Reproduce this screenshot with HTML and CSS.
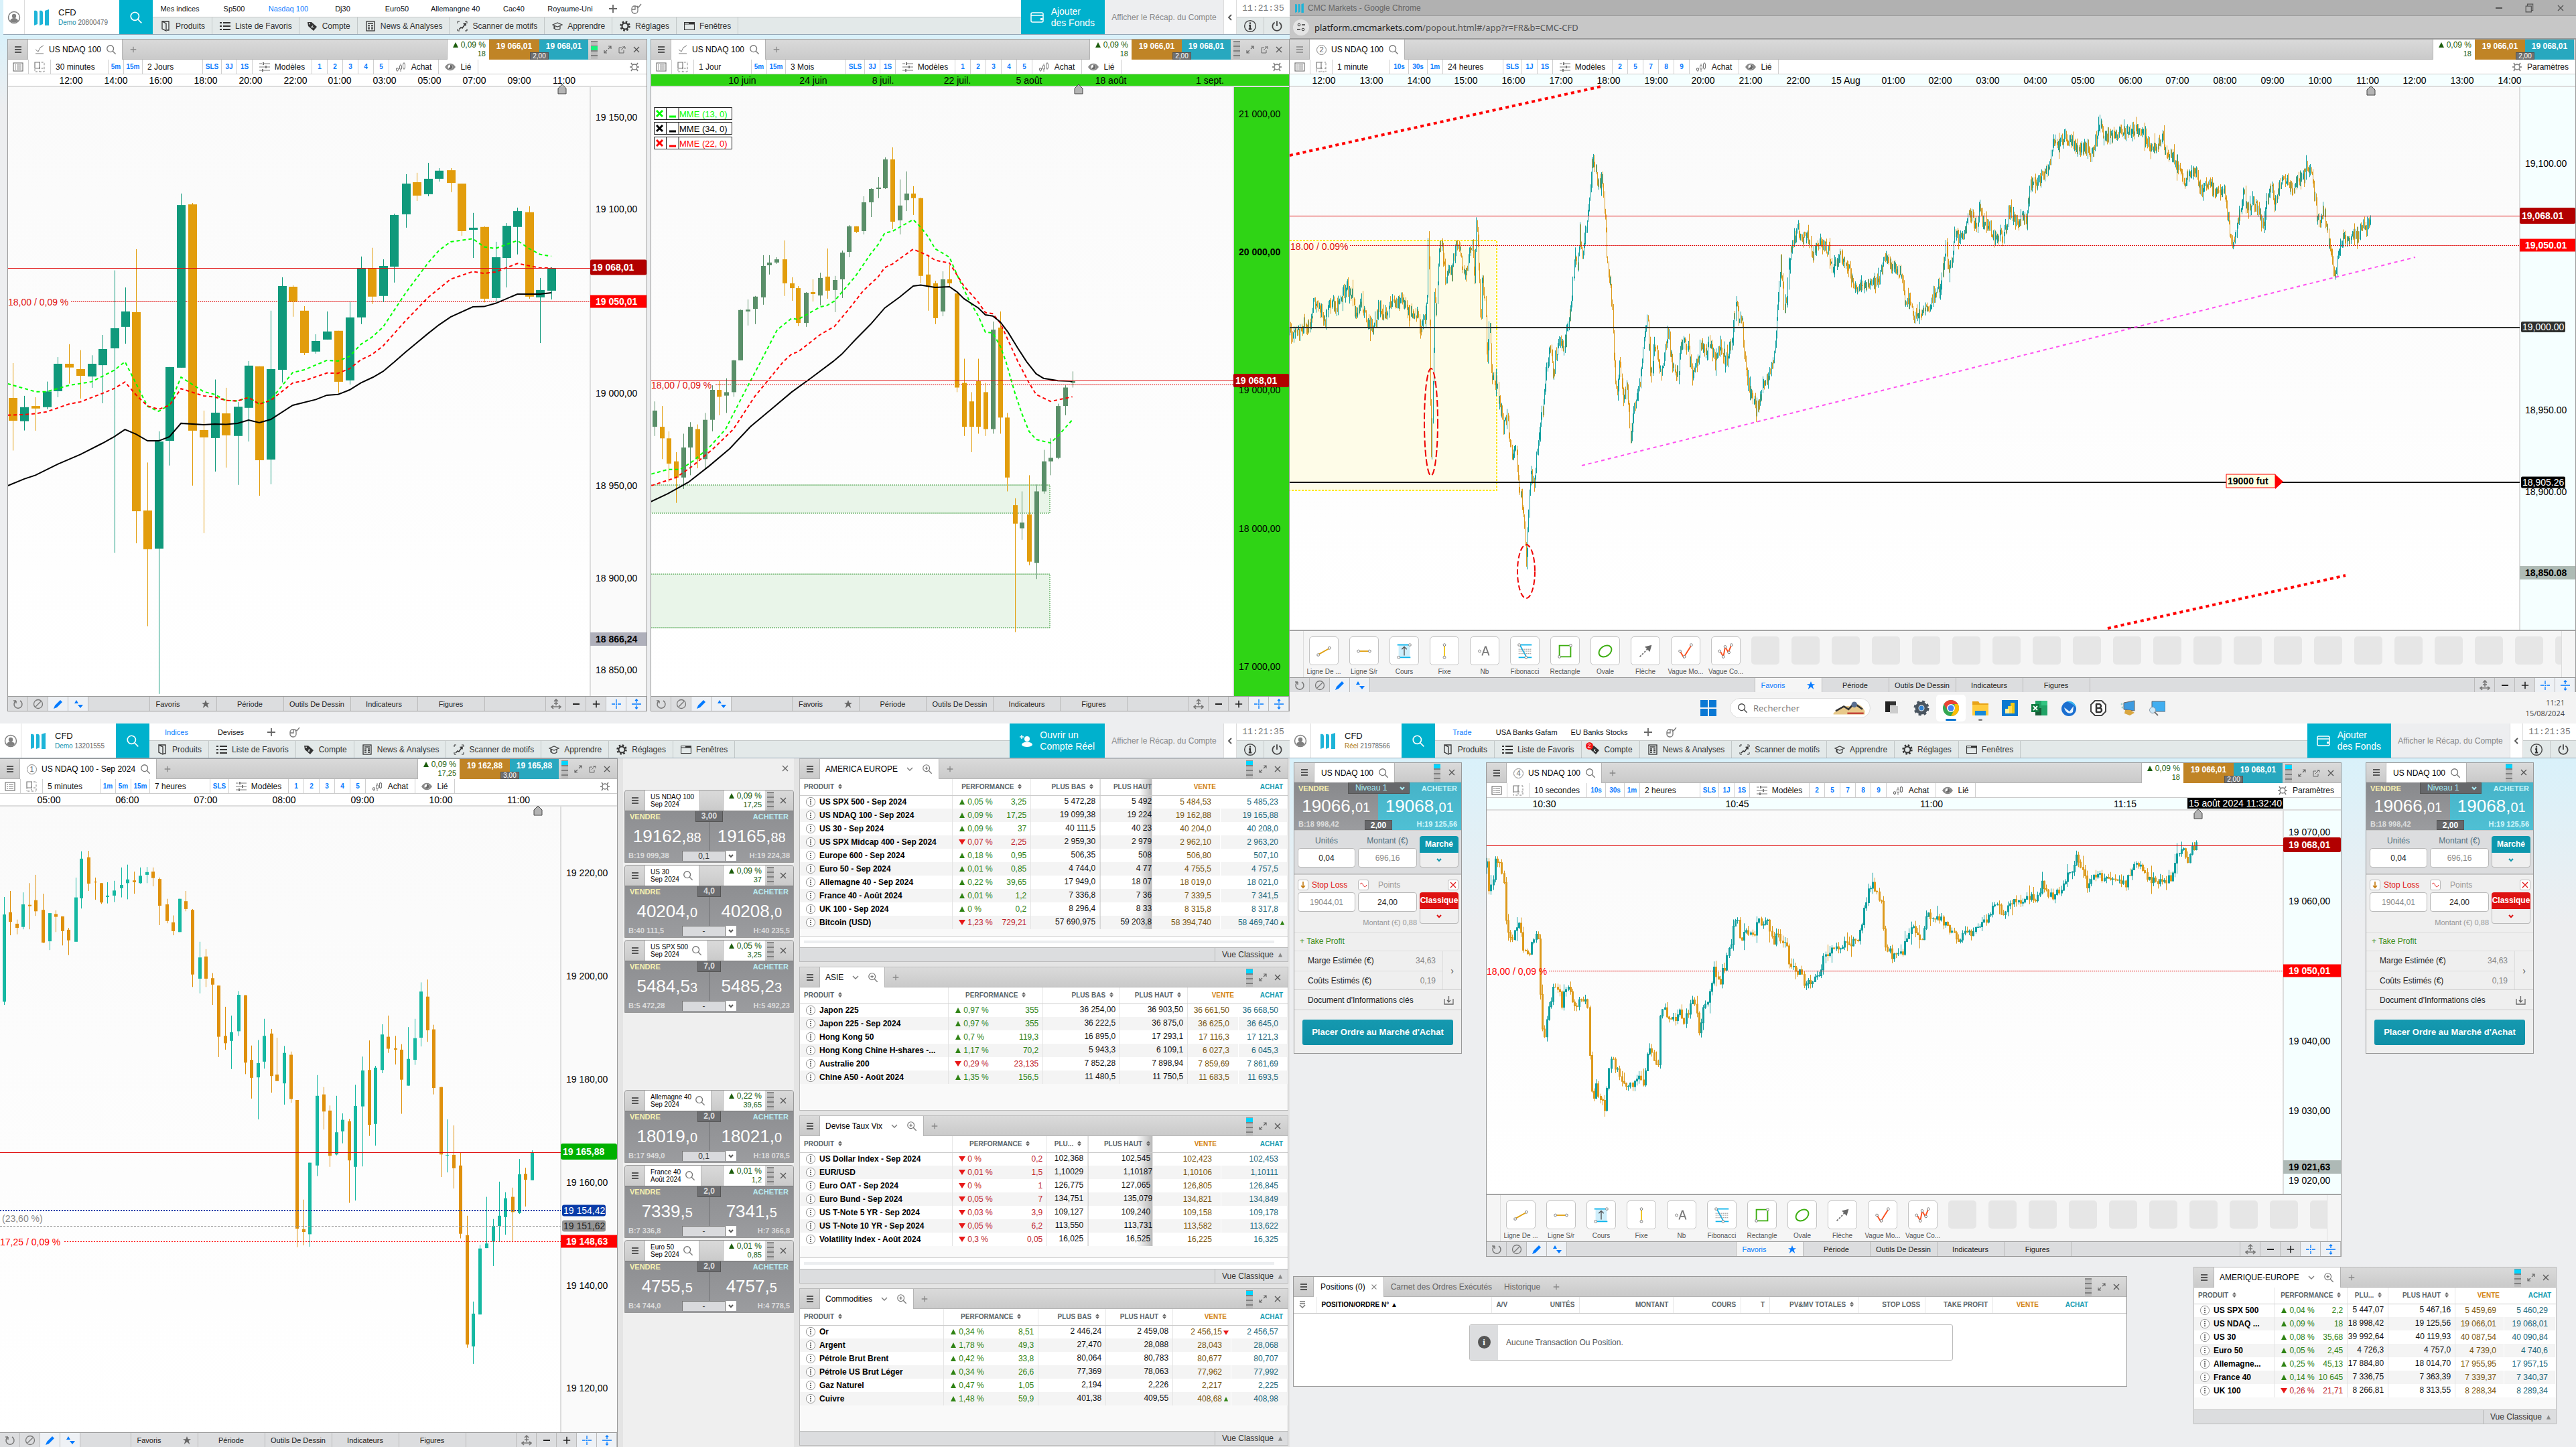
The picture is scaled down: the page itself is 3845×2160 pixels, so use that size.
FILE: index.html
```html
<!DOCTYPE html>
<html lang="fr">
<head>
<meta charset="utf-8">
<title>CMC Markets</title>
<link rel="stylesheet" href="styles.css">
</head>
<body>
<svg class="sprite" aria-hidden="true">
  <symbol id="user" viewBox="0 0 20 20"><circle cx="10" cy="10" r="8.5" fill="none" stroke="#808080" stroke-width="1.5"/><circle cx="10" cy="8" r="3.2" fill="#808080"/><path d="M4 15c1-3 3-4 6-4s5 1 6 4c-3 3.500-9 3.500-12 0z" fill="#808080"/></symbol>
  <symbol id="logo" viewBox="0 0 22 24"><path d="M0 2c3-1 5 0 5 3v17L0 24zM8 2c3-1 5 0 5 3v17l-5 2zM16 2l6-2v24h-6z" fill="#1db4d8"/></symbol>
  <symbol id="search" viewBox="0 0 18 18"><circle cx="7.500" cy="7.500" r="5.500" fill="none" stroke="currentColor" stroke-width="1.500"/><path d="M11.500 11.500l5 5" stroke="currentColor" stroke-width="1.500"/></symbol>
  <symbol id="zoomin" viewBox="0 0 18 18"><circle cx="7.500" cy="7.500" r="5.500" fill="none" stroke="currentColor" stroke-width="1.300"/><path d="M11.500 11.500l5 5M5 7.500h5M7.500 5v5" stroke="currentColor" stroke-width="1.500"/></symbol>
  <symbol id="plus" viewBox="0 0 14 14"><path d="M7 1v12M1 7h12" stroke="currentColor" stroke-width="1.800"/></symbol>
  <symbol id="minus" viewBox="0 0 14 14"><path d="M2 7h10" stroke="currentColor" stroke-width="2"/></symbol>
  <symbol id="cross" viewBox="0 0 14 14"><path d="M3 3l8 8M11 3l-8 8" stroke="currentColor" stroke-width="1.300"/></symbol>
  <symbol id="mouse" viewBox="0 0 16 16"><rect x="1" y="4" width="9" height="11" rx="4" fill="none" stroke="#777" stroke-width="1.300"/><path d="M1 9h5V4M9 4l2 2 4-5" fill="none" stroke="#777" stroke-width="1.300"/></symbol>
  <symbol id="book" viewBox="0 0 16 16"><path d="M3 1h10v13h-3M3 1l6 3v11l-6-3z" fill="none" stroke="#333" stroke-width="1.300"/></symbol>
  <symbol id="list" viewBox="0 0 16 16"><path d="M0 3h3M0 8h3M0 13h3M5 3h11M5 8h11M5 13h11" stroke="#333" stroke-width="2"/></symbol>
  <symbol id="tag" viewBox="0 0 16 16"><path d="M1 2l6 0 8 7-5 6-8-7z" fill="#333"/><circle cx="4" cy="4.500" r="1" fill="#fff"/><path d="M7 8l3 3M9 7l-2 4" stroke="#e3eaea"/></symbol>
  <symbol id="news" viewBox="0 0 16 16"><rect x="2" y="1" width="12" height="14" fill="none" stroke="#333" stroke-width="1.300"/><path d="M4 4h8M4 7h3M9 7h3M4 9.500h3M9 9.500h3M4 12h3M9 12h3" stroke="#333" stroke-width="1.600"/></symbol>
  <symbol id="scan" viewBox="0 0 16 16"><path d="M1 4V1h3M12 1h3v3M15 12v3h-3M4 15H1v-3" fill="none" stroke="#333"/><path d="M3 13l3-3 2 1 5-7M9.500 4.500L13 4v3.500" fill="none" stroke="#333" stroke-width="1.500"/></symbol>
  <symbol id="learn" viewBox="0 0 16 16"><path d="M1 6l7-3 7 3-7 3zM4 8v4c2 2 6 2 8 0V8M3 7v5" fill="none" stroke="#444" stroke-width="1.200"/></symbol>
  <symbol id="gear" viewBox="0 0 16 16"><circle cx="8" cy="8" r="4.500" fill="none" stroke="#333" stroke-width="2"/><circle cx="8" cy="8" r="6.500" fill="none" stroke="#333" stroke-width="2.500" stroke-dasharray="2.500 2.600"/></symbol>
  <symbol id="windows" viewBox="0 0 16 16"><path d="M.5 2.500h15v11H.5zM0 5h16" fill="none" stroke="#333" stroke-width="1.200"/><path d="M7 2h8v3H7z" fill="#333"/></symbol>
  <symbol id="wallet" viewBox="0 0 20 16"><rect x="1" y="1" width="18" height="14" rx="2" fill="none" stroke="#fff" stroke-width="1.500"/><path d="M1 5h18" stroke="#fff" stroke-width="1.500"/><rect x="15" y="9" width="3" height="3" fill="#fff"/></symbol>
  <symbol id="adduser" viewBox="0 0 20 20"><circle cx="12" cy="7" r="4" fill="#fff"/><path d="M4 16c0-6 16-6 16 0-2 4-14 4-16 0z" fill="#fff"/><path d="M4 1v6M1 4h6" stroke="#fff" stroke-width="1.300"/></symbol>
  <symbol id="chevleft" viewBox="0 0 8 10"><path d="M6 1L2 5l4 4" fill="none" stroke="#555" stroke-width="1.800"/></symbol>
  <symbol id="chevdown" viewBox="0 0 12 8"><path d="M2 2l4 4 4-4" fill="none" stroke="currentColor" stroke-width="1.300"/></symbol>
  <symbol id="chevbold" viewBox="0 0 10 8"><path d="M2 2l3 3 3-3" fill="none" stroke="currentColor" stroke-width="2"/></symbol>
  <symbol id="info" viewBox="0 0 18 18"><circle cx="9" cy="9" r="7.500" fill="none" stroke="#444" stroke-width="1.300"/><path d="M9 4v2M7.500 8H9v5M7 13h4" stroke="#333" stroke-width="2"/></symbol>
  <symbol id="power" viewBox="0 0 18 18"><path d="M6 4a6 6 0 1 0 6 0M9 2v7" fill="none" stroke="#444" stroke-width="1.600"/></symbol>
  <symbol id="burger" viewBox="0 0 12 12"><path d="M1 2h10M1 6h10M1 10h10" stroke="currentColor" stroke-width="1.800"/></symbol>
  <symbol id="linechart" viewBox="0 0 14 14"><path d="M1 7l4 3 3-6 5-3M1 13h12" fill="none" stroke="#777"/></symbol>
  <symbol id="expand" viewBox="0 0 12 12"><path d="M1 7v4h4M1 11l4-4M11 5V1H7M11 1L7 5" fill="none" stroke="#666" stroke-width="1.200"/></symbol>
  <symbol id="popout" viewBox="0 0 12 12"><path d="M6 3H2v8h7V7M7 2h4v3M11 1L5 7" fill="none" stroke="#666"/></symbol>
  <symbol id="sheet" viewBox="0 0 16 14"><rect x="1" y="1" width="14" height="12" fill="none" stroke="#777" stroke-width="1.200"/><path d="M3 4h2M3 7h2M3 10h2M6 4h7M6 7h7M6 10h7" stroke="#777" stroke-width="1.200"/></symbol>
  <symbol id="layout" viewBox="0 0 16 16"><path d="M1 1h7v9H1z" fill="none" stroke="#777" stroke-width="1.200"/><path d="M8 1h7v14H1v-5M8 10h7M8 8v7" fill="none" stroke="#777" stroke-dasharray="1 1"/></symbol>
  <symbol id="sliders" viewBox="0 0 16 14"><path d="M0 2h4M6 2h10M0 7h9M11 7h5M0 12h4M6 12h10" stroke="#777"/><path d="M6 0v4M10 5v4M5 10v4" stroke="#777" stroke-width="2"/></symbol>
  <symbol id="candle" viewBox="0 0 16 14"><path d="M2 8v6M7 2v12M12 0v11" stroke="#888"/><path d="M.500 9h3v3h-3zM5.500 5h3v5h-3zM10.500 2h3v7h-3z" fill="#fff" stroke="#777"/></symbol>
  <symbol id="eye" viewBox="0 0 16 12"><path d="M0 6c4-7 12-7 16 0-4 7-12 7-16 0z" fill="#888"/><circle cx="8" cy="6" r="3.500" fill="#fff"/><path d="M8 2.500A3.500 3.500 0 1 1 5 8l3-2z" fill="#666"/></symbol>
  <symbol id="cog" viewBox="0 0 16 14"><circle cx="8" cy="7" r="4" fill="none" stroke="#777" stroke-width="1.300"/><path d="M1 7h3M12 7h3M3 1l2 3M13 1l-2 3M3 13l2-3M13 13l-2-3" stroke="#777" stroke-width="1.500"/></symbol>
  <symbol id="reload" viewBox="0 0 16 16"><path d="M5 3a6 6 0 1 0 6 0M5 3v4M5 3H1" fill="none" stroke="#777" stroke-width="1.500"/></symbol>
  <symbol id="forbid" viewBox="0 0 16 16"><circle cx="8" cy="8" r="6.500" fill="none" stroke="#777" stroke-width="1.300"/><path d="M4 12l8-8" stroke="#777" stroke-width="1.300"/></symbol>
  <symbol id="pencil" viewBox="0 0 16 16"><path d="M1 15l2-5 8-8 3 3-8 8z" fill="#007aff"/></symbol>
  <symbol id="updown" viewBox="0 0 16 16"><path d="M2 7l3-5 3 5zM7 9h8l-4 5z" fill="#007aff"/></symbol>
  <symbol id="star" viewBox="0 0 14 14"><path d="M7 0l2 5h5l-4 3 2 6-5-4-5 4 2-6-4-3h5z" fill="currentColor"/></symbol>
  <symbol id="fit" viewBox="0 0 16 16"><path d="M8 1v9M5 4l3-3 3 3M5 7h6M2 12h12M4 10l-3 2 3 3M12 10l3 2-3 3" fill="none" stroke="#777" stroke-width="1.600"/></symbol>
  <symbol id="xhair" viewBox="0 0 16 16"><path d="M8 1v5M8 10v5M1 8h5M10 8h5M8 7v2M7 8h2" stroke="#007aff" stroke-width="1.300"/></symbol>
  <symbol id="vfit" viewBox="0 0 16 16"><path d="M1 8h14M8 1v5M8 10v5M6 3l2-2 2 2M6 13l2 2 2-2" fill="none" stroke="#007aff" stroke-width="1.300"/></symbol>
  <symbol id="sort" viewBox="0 0 6 8"><path d="M0 3.500L3 0l3 3.500zM0 4.500h6L3 8z" fill="#666"/></symbol>
  <symbol id="dots" viewBox="0 0 18 18"><circle cx="9" cy="9" r="7.500" fill="#fff" stroke="#888"/><path d="M8 4.500h2v2H8zM8 8h2v2H8zM8 11.500h2v2H8z" fill="#555"/></symbol>
  <symbol id="up" viewBox="0 0 10 8"><path d="M1 8l4-8 4 8z" fill="currentColor"/></symbol>
  <symbol id="down" viewBox="0 0 10 8"><path d="M0 0h10L5 8z" fill="currentColor"/></symbol>
  <symbol id="download" viewBox="0 0 16 14"><path d="M1 5v8h13V5M7.500 1v8M5 7l2.500 3L10 7" fill="none" stroke="#666" stroke-width="1.300"/></symbol>
  <symbol id="wave" viewBox="0 0 12 12"><path d="M1 5c3-4 4 0 5 2s3 3 5-1" fill="none" stroke="#e01818"/></symbol>
  <symbol id="arrowdn" viewBox="0 0 12 12"><path d="M6 1v9M3 7l3 3 3-3" fill="none" stroke="#c47a10" stroke-width="1.600"/></symbol>
  <symbol id="tune" viewBox="0 0 16 16"><circle cx="5" cy="4" r="1.800" fill="none" stroke="#333"/><path d="M9 4h5M2 11h5" stroke="#333" stroke-width="1.500"/><circle cx="11" cy="11" r="1.800" fill="none" stroke="#333"/></symbol>
  <symbol id="restore" viewBox="0 0 12 12"><path d="M1 3.500h7V11H1zM3 3V1h7v8H8" fill="none" stroke="#555"/></symbol>
  <symbol id="handle" viewBox="0 0 10 12"><path d="M1 1h8M1 4h8M1 6l4 4 4-4" fill="none" stroke="#777" stroke-width="1.500"/></symbol>
  <symbol id="t0" viewBox="0 0 30 30"><path d="M7 20L23 11" stroke="#e0a010" stroke-width="2"/><circle cx="6" cy="21" r="2" fill="#fff" stroke="#777"/><circle cx="24" cy="10" r="2" fill="#fff" stroke="#777"/></symbol>
  <symbol id="t1" viewBox="0 0 30 30"><path d="M8 15h14" stroke="#e0a010" stroke-width="2"/><circle cx="6" cy="15" r="2" fill="#fff" stroke="#777"/><circle cx="24" cy="15" r="2" fill="#fff" stroke="#777"/></symbol>
  <symbol id="t2" viewBox="0 0 30 30"><path d="M6 5h18v20H6z" fill="#cdeefb"/><path d="M4 5h18M7 25h18" stroke="#0bb4ec" stroke-width="2"/><path d="M15 22V9M11 12l4-4 4 4" fill="none" stroke="#555" stroke-width="1.500"/><circle cx="24" cy="5" r="2" fill="#fff" stroke="#777"/><circle cx="6" cy="25" r="2" fill="#fff" stroke="#777"/></symbol>
  <symbol id="t3" viewBox="0 0 30 30"><path d="M15 6v18" stroke="#f0c419" stroke-width="2"/><circle cx="15" cy="5" r="2" fill="#fff" stroke="#777"/><circle cx="15" cy="25" r="2" fill="#fff" stroke="#777"/></symbol>
  <symbol id="t4" viewBox="0 0 30 30"><circle cx="7" cy="15" r="2" fill="#fff" stroke="#777"/><path d="M11 22l5-14h1l5 14M13 17h7" fill="none" stroke="#777" stroke-width="2"/></symbol>
  <symbol id="t5" viewBox="0 0 30 30"><path d="M8 5h18M5 25h21M7 5l11 20" stroke="#0bb4ec" stroke-width="2"/><path d="M5 12h20M5 15h20M5 19h20" stroke="#888" stroke-dasharray="2 1"/><circle cx="6" cy="5" r="2" fill="#fff" stroke="#777"/><circle cx="17" cy="25" r="2" fill="#fff" stroke="#777"/></symbol>
  <symbol id="t6" viewBox="0 0 30 30"><path d="M6 6h18v18H6z" fill="none" stroke="#3dae11" stroke-width="2"/><circle cx="24" cy="6" r="2" fill="#fff" stroke="#777"/><circle cx="6" cy="24" r="2" fill="#fff" stroke="#777"/></symbol>
  <symbol id="t7" viewBox="0 0 30 30"><ellipse cx="15" cy="15" rx="11" ry="8" transform="rotate(-35 15 15)" fill="none" stroke="#3dae11" stroke-width="2"/></symbol>
  <symbol id="t8" viewBox="0 0 30 30"><path d="M6 24L20 10" stroke="#777" stroke-width="2" stroke-dasharray="3 2"/><path d="M14 8l11-3-3 11z" fill="#666"/></symbol>
  <symbol id="t9" viewBox="0 0 30 30"><path d="M6 15l6 10L24 6" fill="none" stroke="#fb4b1a" stroke-width="2"/><circle cx="6" cy="15" r="2" fill="#fff" stroke="#777"/><circle cx="13" cy="24" r="2" fill="#fff" stroke="#777"/><circle cx="24" cy="5" r="2" fill="#fff" stroke="#777"/></symbol>
  <symbol id="t10" viewBox="0 0 30 30"><path d="M6 15l5 9 3-16 5 9 5-12" fill="none" stroke="#fb4b1a" stroke-width="2"/><circle cx="5" cy="15" r="2" fill="#fff" stroke="#777"/><circle cx="11" cy="24" r="2" fill="#fff" stroke="#777"/><circle cx="14" cy="8" r="2" fill="#fff" stroke="#777"/><circle cx="20" cy="17" r="2" fill="#fff" stroke="#777"/><circle cx="24" cy="5" r="2" fill="#fff" stroke="#777"/></symbol>
  <symbol id="winlogo" viewBox="0 0 24 24"><path d="M0 0h11v11H0zM13 0h11v11H13zM0 13h11v11H0zM13 13h11v11H13z" fill="#0a78d4"/></symbol>
  <symbol id="taskview" viewBox="0 0 24 24"><path d="M2 2h16v16H2z" fill="#333"/><path d="M8 8h14v13H8z" fill="#f3f3f3"/><path d="M9 9h12v11H9z" fill="#ccc"/><path d="M2 2h7v16H2z" fill="#222"/></symbol>
  <symbol id="wset" viewBox="0 0 24 24"><circle cx="12" cy="12" r="7" fill="none" stroke="#4a5560" stroke-width="5"/><circle cx="12" cy="12" r="10" fill="none" stroke="#4a5560" stroke-width="3" stroke-dasharray="4 4"/><circle cx="12" cy="12" r="3.500" fill="#2f80d0"/></symbol>
  <symbol id="chrome" viewBox="0 0 24 24"><circle cx="12" cy="12" r="12" fill="#34a853"/><path d="M12 0a12 12 0 0 1 10.500 6H12L6.500 14.500 1.600 6A12 12 0 0 1 12 0z" fill="#ea4335"/><path d="M22.500 6A12 12 0 0 1 12 24l5.500-10V6z" fill="#fbbc05"/><circle cx="12" cy="12" r="6" fill="#fff"/><circle cx="12" cy="12" r="4.500" fill="#4285f4"/></symbol>
  <symbol id="folder" viewBox="0 0 24 24"><path d="M0 2h9l2 3h13v18H0z" fill="#e8a317"/><path d="M0 7h24v16H0z" fill="#ffcb3d"/><path d="M4 16h16v7H4z" fill="#1689d8"/></symbol>
  <symbol id="pbi" viewBox="0 0 24 24"><path d="M0 0h24v24H0z" fill="#0b78d0"/><path d="M13 4h6v16h-6z" fill="#f2c811"/><path d="M9 9h6v11H9z" fill="#ffd94a"/><path d="M5 13h6v7H5z" fill="#fff09a"/></symbol>
  <symbol id="excel" viewBox="0 0 24 24"><path d="M6 1h18v22H6z" fill="#21a366"/><path d="M15 1h9v7h-9z" fill="#33c481"/><path d="M6 12h9v11H6z" fill="#185c37"/><path d="M0 6h12v12H0z" fill="#107c41"/><path d="M3 9l6 6M9 9l-6 6" stroke="#fff" stroke-width="1.800"/></symbol>
  <symbol id="bird" viewBox="0 0 24 24"><circle cx="12" cy="13" r="11" fill="#1b6fd0"/><path d="M8 2c8-2 14 3 15 10-3-5-8-8-15-10z" fill="#39b5f0"/><path d="M5 11l8 6 6-8-1 9c-5 4-11 1-13-7z" fill="#e8f3fd"/></symbol>
  <symbol id="bee" viewBox="0 0 24 24"><path d="M7 1h10l6 6v10l-6 6H7l-6-6V7z" fill="#fff" stroke="#444" stroke-width="2"/><path d="M8 6h5a3 3 0 0 1 0 6H9h5a3 3 0 0 1 0 6H8M9 6v12" fill="none" stroke="#333" stroke-width="2.500"/></symbol>
  <symbol id="pcbox" viewBox="0 0 24 24"><path d="M6 4l16-3v15L6 14z" fill="#3d9be0" stroke="#666"/><path d="M8 15l8 0 6 4-7 4-8-3z" fill="#d9a640"/><circle cx="3" cy="6" r="1.500" fill="#9cc"/><circle cx="4" cy="11" r="1.500" fill="#9cc"/></symbol>
  <symbol id="pcfind" viewBox="0 0 24 24"><path d="M4 2h20v15H4z" fill="#41aef0" stroke="#567"/><circle cx="5" cy="15" r="4.500" fill="#cfe8f6" stroke="#89a"/><path d="M8 18l5 5" stroke="#777" stroke-width="2"/></symbol>
</svg>

<main class="desk">
  <section class="screen screen-tl">
    <header class="topbar" data-topbar="indices"></header>
    <div class="pair">
      <article class="win chart" data-chart="m30"></article>
      <article class="win chart" data-chart="daily"></article>
    </div>
  </section>

  <section class="screen screen-tr">
    <div class="browser-title"><svg class="fav"><use href="#logo"/></svg><span>CMC Markets - Google Chrome</span>
      <div class="sys"><button aria-label="Réduire"><svg><use href="#minus"/></svg></button><button aria-label="Restaurer"><svg><use href="#restore"/></svg></button><button aria-label="Fermer"><svg><use href="#cross"/></svg></button></div></div>
    <div class="browser-url"><i class="site"><svg><use href="#tune"/></svg></i><span>platform.cmcmarkets.com<em>/popout.html#/app?r=FR&amp;b=CMC-CFD</em></span></div>
    <article class="win chart popup" data-chart="minute"></article>
    <footer class="taskbar">
      <div class="tasks">
        <button class="task" aria-label="Démarrer"><svg><use href="#winlogo"/></svg></button>
        <label class="find"><svg><use href="#search"/></svg><input type="text" placeholder="Rechercher" aria-label="Rechercher"><svg class="art" viewBox="0 0 54 30"><path d="M0 24c10-10 20-14 28-12 10-8 20-4 26 8v6H0z" fill="#e8c98a"/><path d="M4 20l14-8 8 5 10-10 14 10" fill="none" stroke="#333" stroke-width="3"/><circle cx="36" cy="9" r="5" fill="#5a6f90"/><path d="M24 24h28" stroke="#c4473a" stroke-width="3"/></svg></label>
        <button class="task" aria-label="Vue des tâches"><svg><use href="#taskview"/></svg></button>
        <button class="task" aria-label="Paramètres"><svg><use href="#wset"/></svg></button>
        <button class="task on" aria-label="Chrome"><svg><use href="#chrome"/></svg></button>
        <button class="task dot" aria-label="Dossiers"><svg><use href="#folder"/></svg></button>
        <button class="task" aria-label="Power BI"><svg><use href="#pbi"/></svg></button>
        <button class="task" aria-label="Excel"><svg><use href="#excel"/></svg></button>
        <button class="task" aria-label="Courrier"><svg><use href="#bird"/></svg></button>
        <button class="task" aria-label="B"><svg><use href="#bee"/></svg></button>
        <button class="task" aria-label="Installation"><svg><use href="#pcbox"/></svg></button>
        <button class="task" aria-label="Bureau à distance"><svg><use href="#pcfind"/></svg></button>
      </div>
      <div class="date"><span>11:21</span><span>15/08/2024</span></div>
    </footer>
  </section>

  <section class="screen screen-bl">
    <header class="topbar" data-topbar="devises"></header>
    <div class="triple">
      <article class="win chart flush" data-chart="m5"></article>
      <aside class="cards"><button class="close" aria-label="Fermer"><svg><use href="#cross"/></svg></button><div class="stack" data-cards></div></aside>
      <div class="lists">
        <article class="win list" data-list="america"></article>
        <article class="win list" data-list="asie"></article>
        <article class="win list" data-list="devise"></article>
        <article class="win list" data-list="commod"></article>
      </div>
    </div>
  </section>

  <section class="screen screen-br">
    <header class="topbar" data-topbar="trade"></header>
    <div class="trio">
      <article class="win order" data-order="a"></article>
      <article class="win chart" data-chart="s10"></article>
      <article class="win order" data-order="b"></article>
    </div>
    <div class="duo">
      <article class="win positions" data-positions></article>
      <article class="win list" data-list="amerique"></article>
    </div>
  </section>
</main>
<script src="app.js"></script>
</body>
</html>
```
FILE: styles.css
```css
* { box-sizing: border-box; }
body { margin: 0; font: 12px/16px "Liberation Sans", Arial, sans-serif; color: #222; background: #edeef0; }
button, input { font: inherit; color: inherit; border: 0; padding: 0; margin: 0; background: none; }
a { color: inherit; text-decoration: none; }
svg { display: block; flex: none; }
.sprite { position: absolute; width: 0; height: 0; }
.i8 { width: 8px; height: 8px; } .i10 { width: 10px; height: 10px; } .i12 { width: 12px; height: 12px; }
.i14 { width: 14px; height: 14px; } .i16 { width: 16px; height: 16px; } .i20 { width: 20px; height: 20px; }

.desk { display: grid; grid-template-columns: 1925fr 1920fr; grid-template-rows: minmax(1080px, auto) minmax(1080px, auto); }
.screen { min-width: 0; display: flex; flex-direction: column; background: #edeef0; }
.screen-tl { padding-left: 5px; background: linear-gradient(to bottom, #d9f1fa 52px, #edeef0 160px); }
.screen-br { background: linear-gradient(to bottom, #d9f1fa 52px, #edeef0 300px); }
.screen-bl { background: #e4e4e4; }
.screen-tr { background: #f3f3f3; }

/* top bar */
.topbar { display: flex; height: 52px; background: #fff; border-bottom: 1px solid #98a9b8; }
.topbar .me { width: 32px; display: grid; place-items: center; border-right: 1px solid #ddd; }
.topbar .brand { display: flex; align-items: center; gap: 14px; padding: 0 17px 0 14px; }
.brand svg { width: 22px; height: 24px; }
.brand b { display: block; font-weight: 400; font-size: 13px; line-height: 16px; color: #111; }
.brand small { display: block; font-size: 10px; line-height: 13px; color: #666; }
.brand small i { font-style: normal; color: #1490ad; }
.brand small i.real { color: #ad7a10; }
.topbar .seek { width: 50px; background: #00b1cd; color: #fff; display: grid; place-items: center; }
.menus { flex: 1; min-width: 0; }
.tabs { display: flex; height: 25px; align-items: center; font-size: 11px; color: #111; }
.tabs a { min-width: 81px; padding: 0 10px; text-align: center; }
.tabs a.on { color: #0a7cff; }
.tabs svg { margin-left: 13px; color: #666; }
.tabs svg + svg { margin-left: 20px; }
.menus nav { display: flex; height: 26px; background: #e3e9e9; border-top: 1px solid #c4c8c8; }
.menus nav a { display: flex; align-items: center; gap: 7px; padding: 0 10px 0 11px; border-right: 1px solid #c2c8c8; color: #333; position: relative; }
.menus nav .badge { position: absolute; left: 6px; top: 2px; width: 11px; height: 11px; border-radius: 6px; background: #f01515; color: #fff; font-size: 9px; line-height: 11px; text-align: center; }
.fund { display: flex; align-items: center; gap: 11px; padding: 0 15px 0 14px; background: #00b1cd; color: #fff; font-size: 14px; line-height: 17px; text-align: left; min-width: 125px; }
.fund svg { width: 20px; height: 20px; }
.recap { width: 177px; background: #edeef0; color: #888; }
.fold { width: 19px; display: grid; place-items: center; border-left: 1px solid #ddd; }
.fold svg { width: 8px; height: 10px; }
.side { width: 80px; border-left: 1px solid #ddd; }
.side time { display: block; height: 25px; line-height: 26px; text-align: center; color: #777; font-family: "Liberation Mono", monospace; font-size: 13px; }
.side div { display: grid; grid-template-columns: 1fr 1fr; height: 26px; background: #e3e9e9; border-top: 1px solid #c4c8c8; }
.side button { display: grid; place-items: center; }
.side button + button { border-left: 1px solid #c4c8c8; }

/* window frame */
.win { border: 1px solid #999; background: #fff; min-width: 0; display: flex; flex-direction: column; }
.bar { display: flex; height: 30px; background: linear-gradient(#dadada, #cacaca); border-bottom: 1px solid #b4b4b4; color: #555; }
.bar .menu { width: 30px; display: grid; place-items: center; border-right: 1px solid #b4b4b4; }
.bar .tab { display: flex; align-items: center; gap: 7px; padding: 0 8px 0 10px; height: 30px; background: #fff; color: #000; border-right: 1px solid #b4b4b4; white-space: nowrap; }
.bar .tab svg { color: #777; }
.bar .dim { color: #666; background: none; border: 0; }
.bar .num { width: 15px; height: 15px; border: 1px solid #888; border-radius: 8px; font-size: 11px; line-height: 13px; text-align: center; color: #666; }
.bar .add { width: 32px; display: grid; place-items: center; color: #888; }
.bar .grow { flex: 1; }
.perf { width: 63px; background: #fff; color: #1c5d0c; text-align: right; padding: 1px 5px 0 0; border-left: 1px solid #b4b4b4; line-height: 14px; height: 30px; }
.perf svg { display: inline-block; width: 10px; height: 8px; margin-right: 3px; }
.perf small { display: block; font-size: 11px; line-height: 13px; }
.quote { display: grid; grid-template-columns: 75px 73px; position: relative; color: #fff; font-weight: 700; text-align: center; height: 30px; }
.quote b { padding-top: 2px; }
.quote .sell { background: #c08426; } .quote .buy { background: #28a8bf; }
.quote i { position: absolute; left: 61px; bottom: 0; width: 28px; height: 11px; background: #6f6f6f; border: 1px solid #555; font: 400 10px/9px "Liberation Sans", sans-serif; }
.tools { display: flex; align-items: center; gap: 9px; padding: 0 8px 0 4px; }
.level { width: 10px; height: 28px; }

/* chart window */
.strip { display: flex; height: 22px; border-bottom: 1px solid #ccc; color: #111; white-space: nowrap; }
.strip > * { height: 21px; line-height: 20px; border-right: 1px solid #d0d0d0; display: flex; align-items: center; justify-content: center; gap: 7px; }
.strip .w30 { width: 31px; } .strip .w33 { width: 33px; } .strip .w86 { width: 86px; justify-content: flex-start; padding-left: 7px; }
.strip .w90 { width: 90px; justify-content: flex-start; padding-left: 7px; }
.strip .q { width: 23px; color: #0a7cff; font-weight: 700; font-size: 10px; }
.strip .q.wide { width: 28px; }
.strip .w89 { width: 89px; } .strip .w74 { width: 74px; } .strip .w59 { width: 59px; }
.strip .grow { flex: 1; border: 0; justify-content: flex-end; padding-right: 10px; }
.plot { width: 100%; height: auto; background: linear-gradient(#fafafa, #fff); font-size: 14px; }
.foot { display: flex; height: 22px; background: #dcdddf; border-top: 1px solid #999; font-size: 11px; color: #222; }
.foot button { width: 30px; display: grid; place-items: center; border-right: 1px solid #bbb; }
.foot .lit { background: #eef1f5; }
.foot .name { width: 100px; display: flex; justify-content: center; align-items: center; }
.foot .fav { justify-content: space-between; padding: 0 10px 0 9px; color: #222; }
.foot .fav.on { background: #f5f5f5; color: #0a7cff; }
.foot .fav svg { color: #666; } .foot .fav.on svg { color: #0a7cff; }
.foot .grow { flex: 1; border-right: 1px solid #bbb; }
.palette { height: 71px; background: #f5f5f5; border-top: 2px solid #a4a4a4; padding: 0 20px; overflow: hidden; }
.palette > div { display: flex; height: 69px; overflow: hidden; border: solid #ddd; border-width: 0 1px; padding: 8px 0 0 0; }
.tool { width: 60px; flex: none; text-align: center; font-size: 10px; line-height: 14px; color: #555; white-space: nowrap; }
.tool i { display: grid; place-items: center; width: 44px; height: 43px; margin: 0 8px 3px; border: 1px solid #c4c4c4; border-radius: 5px; background: #fff; }
.tool i svg { width: 28px; height: 28px; }
.tool.none i { width: 42px; height: 42px; background: #e6e6e6; border: 0; }

/* top-left screen */
.pair { display: grid; grid-template-columns: 955fr 954fr; gap: 5px; padding: 6px 0 0 6px; align-items: start; }

/* top-right screen */
.browser-title { height: 24px; background: #b1b1b1; border-bottom: 1px solid #999; display: flex; align-items: center; gap: 6px; padding-left: 8px; color: #666; }
.browser-title .fav { width: 13px; height: 14px; }
.sys { margin-left: auto; display: flex; gap: 32px; padding-right: 16px; color: #555; }
.sys svg { width: 14px; height: 14px; }
.browser-url { height: 34px; background: #c7c7c7; border-bottom: 1px solid #999; display: flex; align-items: center; gap: 8px; padding-left: 5px; font: 13px/20px "Noto Sans", "Liberation Sans", sans-serif; color: #222; }
.browser-url em { font-style: normal; color: #555; }
.site { width: 24px; height: 24px; border-radius: 12px; background: #e4e4e4; display: grid; place-items: center; }
.site svg { width: 16px; height: 16px; }
.popup { border-left: 0; border-bottom: 0; }
.popup .tools { width: 2px; padding: 0; }
.popup .menu { color: #999; }
.taskbar { flex: 1; display: flex; align-items: center; background: #f3f3f3; position: relative; }
.tasks { display: flex; align-items: center; margin: 0 auto; }
.task { width: 44px; height: 40px; display: grid; place-items: center; position: relative; }
.task svg { width: 24px; height: 24px; }
.task.on { background: #fff; border-radius: 5px; }
.task.on::after, .task.dot::after { content: ""; position: absolute; bottom: 1px; left: 14px; width: 16px; height: 3px; border-radius: 2px; background: #0a74d0; }
.task.dot::after { width: 6px; left: 19px; background: #888; }
.find { display: flex; align-items: center; width: 210px; height: 30px; background: #fff; border: 1px solid #ddd; border-radius: 15px; padding: 0 4px 0 10px; margin: 0 10px 0 10px; color: #444; }
.find > svg:first-child { width: 16px; height: 16px; }
.find input { flex: 1; min-width: 0; padding-left: 8px; font-family: "Open Sans", sans-serif; font-size: 13px; }
.find .art { width: 54px; height: 26px; }
.date { position: absolute; right: 17px; top: 8px; display: flex; flex-direction: column; text-align: right; font: 11px/16px "Open Sans", sans-serif; color: #444; }

/* bottom-left screen */
.triple { flex: 1; display: grid; grid-template-columns: 922fr 255px 730fr; column-gap: 8px; padding-right: 2px; }
.flush { border-left: 0; border-bottom: 0; }
.cards { background: #efefef; padding: 8px 0 0 2px; }
.close { display: block; margin: 0 6px 27px auto; width: 14px; height: 12px; color: #666; }
.close svg { width: 14px; height: 14px; }
.stack { display: flex; flex-direction: column; gap: 3px; }
.card { height: 109px; border: 1px solid #999; border-radius: 4px 4px 0 0; overflow: hidden; background: linear-gradient(#88898c, #9b9c9f); color: #ddd; }
.card.blank { visibility: hidden; }
.card .bar { height: 31px; border-bottom-color: #777; }
.card .tab { font-size: 10px; line-height: 11px; padding: 0 8px; gap: 5px; }
.card .tools { padding: 0 8px 0 3px; gap: 7px; }
.deal { display: grid; grid-template-columns: 1fr auto 1fr; font-weight: 700; font-size: 11px; line-height: 14px; padding: 0 7px; height: 16px; }
.deal b:first-child { color: #f8f0b0; padding-top: 1px; } .deal b:last-child { color: #b9ecf2; text-align: right; padding-top: 1px; }
.deal span { background: #6c6d70; border: 1px solid #555; border-top: 0; padding: 0 8px; font-size: 12px; height: 16px; line-height: 14px; }
.big { display: grid; grid-template-columns: 1fr 1fr; text-align: center; font-size: 26px; line-height: 42px; height: 43px; color: #fff; }
.big span + span { border-left: 1px solid #707174; }
.big small { font-size: 20px; }
.lows { display: grid; grid-template-columns: 1fr 65px 16px 1fr; font-weight: 700; font-size: 11px; line-height: 15px; padding: 0 5px; }
.lows > :last-child { text-align: right; }
.lows input { background: #d9dadd; height: 15px; text-align: center; font-weight: 400; font-size: 12px; color: #333; width: 65px; border: 1px solid #777; border-width: 1px 1px 0; }
.lows button { background: #fff; height: 15px; color: #555; display: grid; place-items: center; }

/* product lists */
.lists { display: flex; flex-direction: column; gap: 7px; min-width: 0; }
.list { background: #f9f9f9; border-color: #bbb; }
.list .tab { padding: 0 9px 0 8px; gap: 12px; }
.grid { width: 100%; table-layout: fixed; border-collapse: collapse; font-size: 12px; background: #fff; }
.grid th { height: 24px; padding: 0 9px 0 0; font-size: 10px; text-align: right; color: #5a6468; border-bottom: 1px solid #ccc; border-right: 1px solid #e8e8e8; white-space: nowrap; overflow: hidden; }
.grid th svg { display: inline-block; width: 6px; height: 8px; margin-left: 6px; }
.grid th:first-child { text-align: left; padding-left: 6px; }
.list .grid th:nth-child(2) { text-align: center; padding: 0; }
.grid td { height: 20px; padding: 0 6px 2px 0; line-height: 16px; text-align: right; color: #111; border-right: 1px solid #e4e4e4; white-space: nowrap; overflow: hidden; }
.grid tr:nth-child(even) td { background: #f4f4f4; }
.grid td:first-child { text-align: left; font-weight: 700; color: #000; padding: 0 0 0 8px; }
.grid td:first-child svg { display: inline-block; width: 16px; height: 16px; margin-right: 5px; vertical-align: top; }
.grid .chg { padding-bottom: 0; }
.grid .chg span { float: left; padding-left: 9px; }
.grid .chg svg { display: inline-block; width: 10px; height: 8px; margin-right: 3px; }
.grid .pos { color: #2f8314; } .grid .neg { color: #c01c28; }
.grid .neg svg { color: #e81818; }
.grid td.ask, .grid td.bid, .grid th.ask, .grid th.bid { border-right-color: transparent; padding: 0 13px 0 0; position: relative; }
.grid th.bid, .grid th.ask { padding: 0 6px 0 0; }
.grid td.bid { color: #79560e; } .grid td.ask { color: #20687c; }
.grid th.bid { color: #d38412; } .grid th.ask { color: #129bb1; }
.grid .tick { position: absolute; right: 3px; top: 7px; width: 8px; height: 7px; }
.grid .up { color: #2f8314; } .grid .dn { color: #e81818; }
.grid .edge, .grid tr:nth-child(even) .edge { background-image: linear-gradient(to right, transparent 75%, #b8b8b8); padding-right: 0; }
.grid.near .edge { padding-right: 3px; }
.grid.tight td.bid, .grid.tight td.ask { padding-right: 11px; }
.rest { flex: 1; }
.roll { height: 17px; border-top: 1px solid #ccc; background: #fff; padding: 6px 20px 0 6px; }
.roll i { display: block; height: 4px; background: #eceef0; }
.view { height: 21px; background: #dcdddf; border-top: 1px solid #bbb; display: flex; justify-content: flex-end; }
.view button { border-left: 1px solid #b8b8b8; padding: 0 7px 0 10px; display: flex; align-items: center; gap: 6px; color: #333; }
.view svg { width: 8px; height: 7px; color: #888; }

/* bottom-right screen */
.trio { display: grid; grid-template-columns: 251px 1fr 251px; gap: 36px; padding: 6px 63px 0 6px; align-items: start; }
.order { background: #efefef; }
.order .bar { height: 29px; }
.order .tab { height: 29px; }
.order .tools { gap: 10px; padding-right: 7px; }
.ticket { display: grid; grid-template-columns: 1fr 1fr; height: 71px; position: relative; font-size: 11px; font-weight: 700; }
.ticket > div { padding: 1px 6px; background: linear-gradient(#88898c, #9b9c9f); color: #ddd; display: flex; flex-direction: column; justify-content: space-between; }
.ticket > div + div { background: linear-gradient(#46b3c8, #4fc0d4); color: #d2f5fa; text-align: right; }
.ticket > div b { color: #f8f0b0; } .ticket > div + div b { color: #c5f3f8; }
.ticket p { margin: 0; font-size: 26px; line-height: 34px; font-weight: 400; color: #fff; text-align: center; }
.ticket p small { font-size: 20px; }
.ticket .lvl { position: absolute; left: 80px; top: 0; width: 92px; height: 17px; background: #66676a; border: 1px solid #555; color: #a9eef6; font-weight: 400; font-size: 12px; line-height: 15px; display: flex; align-items: center; justify-content: space-between; padding: 0 5px 0 10px; }
.ticket .sp { position: absolute; left: 105px; bottom: 0; width: 41px; height: 15px; background: #66676a; border: 1px solid #555; color: #fff; text-align: center; font-size: 12px; line-height: 14px; }
.block { display: grid; grid-template-columns: 86px 88px 58px; gap: 0 4px; padding: 8px 5px 0; height: 66px; background: #dcdddf; border-top: 1px solid #ccc; border-bottom: 1px solid #bbb; color: #4f6f80; }
.block > label { display: flex; flex-direction: column; text-align: center; line-height: 15px; }
.block input { height: 29px; width: 100%; margin-top: 3px; border: 1px solid #b8b8b8; border-radius: 4px; background: #fff; text-align: center; color: #222; }
.block input.soft { color: #888; }
.kind { display: flex; flex-direction: column; height: 47px; }
.kind b { background: #0d97ad; color: #fff; height: 25px; line-height: 24px; text-align: center; border-radius: 4px 4px 0 0; }
.kind i { flex: 1; border: 1px solid #bbb; border-top: 0; border-radius: 0 0 4px 4px; background: #efefef; display: grid; place-items: center; color: #0d97ad; }
.block.stop { height: 87px; background: #efefef; border-bottom-color: #ddd; grid-template-rows: 19px 47px 12px; color: #999; padding-top: 7px; }
.cap { display: flex; gap: 5px; align-items: flex-start; line-height: 16px; }
.cap.r { justify-content: flex-end; }
.cap.s { color: #e01818; }
.cap.p { gap: 14px; }
.cap button { width: 16px; height: 16px; border: 1px solid #bbb; border-radius: 3px; background: #fff; display: grid; place-items: center; color: #e01818; }
.stop .kind b { background: #de1212; } .stop .kind i { color: #de1212; }
.stop input { margin-top: 0; }
.stop small { grid-column: 1 / 3; text-align: right; font-size: 11px; line-height: 12px; color: #999; margin-top: -8px; }
.profit { height: 28px; line-height: 27px; padding-left: 8px; border-bottom: 1px solid #ddd; color: #3c8c1c; text-align: left; }
.est { display: grid; grid-template-columns: 1fr 28px; border-bottom: 1px solid #ccc; }
.est dl { margin: 0; }
.est dl div { display: flex; justify-content: space-between; height: 29px; line-height: 28px; padding: 0 10px 0 20px; }
.est dl div + div { border-top: 1px solid #ddd; height: 28px; }
.est dd { margin: 0; color: #888; }
.est button { border-left: 1px solid #ddd; font-size: 14px; color: #555; }
.doc { height: 30px; display: flex; align-items: center; justify-content: space-between; padding: 0 10px 0 20px; border-bottom: 1px solid #ccc; color: #222; }
.place { margin: 14px 12px 12px; height: 38px; border-radius: 3px; background: linear-gradient(#1599b0, #0f8fa6); color: #fff; font-weight: 700; font-size: 13px; }
.duo { display: grid; grid-template-columns: 1245px 542px; justify-content: start; gap: 99px; padding: 15px 0 0 5px; align-items: start; }
.positions { margin-top: 14px; height: 165px; }
.positions .grid th { padding-right: 7px; }
.positions .grid th:first-child { padding-left: 8px; }
.positions .grid th:nth-child(2), .positions .grid th:nth-child(3) { text-align: left; padding-left: 6px; }
.positions .grid th:nth-child(2) { color: #000; }
.positions .grid th .grip { width: 10px; height: 12px; margin: 0; vertical-align: middle; }
.push { float: right; }
.notice { width: 722px; height: 54px; margin: 16px 0 0 262px; border: 1px solid #bbb; border-radius: 3px; display: flex; align-items: center; gap: 12px; color: #555; }
.notice b { width: 42px; height: 52px; background: #dcdddf; display: grid; place-items: center; }
.notice i { width: 19px; height: 19px; border-radius: 10px; background: #555; color: #fff; font: 700 13px/19px "Liberation Serif", serif; text-align: center; }
.duo .list { height: 235px; }
```
FILE: app.js
```js
const ic = (n, c = 'i16') => `<svg class="${c}"><use href="#${n}"/></svg>`;
const fill = (sel, fn) => document.querySelectorAll(sel).forEach(fn);

/* ---------- top bars ---------- */
const bars = {
  indices: { kind: '<i>Demo</i> 20800479', tabs: ['Mes indices', 'Sp500', '*Nasdaq 100', 'Dj30', 'Euro50', 'Allemangne 40', 'Cac40', 'Royaume-Uni'], fund: ['wallet', 'Ajouter<br>des Fonds'] },
  devises: { kind: '<i>Demo</i> 13201555', tabs: ['*Indices', 'Devises'], fund: ['adduser', 'Ouvrir un<br>Compte Réel'] },
  trade: { kind: '<i class="real">Réel</i> 21978566', tabs: ['*Trade', 'USA Banks Gafam', 'EU Banks Stocks'], fund: ['wallet', 'Ajouter<br>des Fonds'], badge: 1 }
};
const nav = [['book', 'Produits'], ['list', 'Liste de Favoris'], ['tag', 'Compte'], ['news', 'News &amp; Analyses'], ['scan', 'Scanner de motifs'], ['learn', 'Apprendre'], ['gear', 'Réglages'], ['windows', 'Fenêtres']];
fill('[data-topbar]', el => {
  const b = bars[el.dataset.topbar];
  el.innerHTML = `<button class="me" aria-label="Profil">${ic('user', 'i20')}</button>
  <a class="brand" href="#"><svg><use href="#logo"/></svg><span><b>CFD</b><small>${b.kind}</small></span></a>
  <button class="seek" aria-label="Rechercher">${ic('search', 'i20')}</button>
  <div class="menus"><div class="tabs">${b.tabs.map(t => `<a href="#"${t[0] === '*' ? ' class="on"' : ''}>${t.replace('*', '')}</a>`).join('')}${ic('plus', 'i14')}${ic('mouse')}</div>
  <nav>${nav.map(([i, t]) => `<a href="#">${ic(i)}${t}${b.badge && i === 'tag' ? '<span class="badge">2</span>' : ''}</a>`).join('')}</nav></div>
  <button class="fund">${ic(b.fund[0], '')}<span>${b.fund[1]}</span></button>
  <button class="recap">Afficher le Récap. du Compte</button>
  <button class="fold" aria-label="Replier">${ic('chevleft', '')}</button>
  <div class="side"><time>11:21:35</time><div><button aria-label="Infos">${ic('info', 'i20')}</button><button aria-label="Quitter">${ic('power', 'i20')}</button></div></div>`;
});

/* ---------- window parts ---------- */
const level = c => `<svg class="level" viewBox="0 0 10 28"><path d="M0 2h10v26H0z" fill="#bcbcbc"/><path d="M0 2h10M0 9h10M0 16h10M0 23h10" stroke="#444"/>${c === 'green' ? '<path d="M0 9h10v6H0z" fill="#19f07c"/>' : c ? '<path d="M0 2h10v6H0z" fill="#00d5ff"/>' : ''}</svg>`;
const burger = `<button class="menu" aria-label="Menu">${ic('burger', 'i12')}</button>`;
const perf = (p, v) => `<div class="perf">${ic('up', '')}${p} %<small>${v}</small></div>`;

/* ---------- charts ---------- */
const G = 'G', O = 'O';
const m30 = `O 31 1725 1824 1574 1953|G 59 1765 1826 1716 1866|O 86 1760 1771 1722 1867|G 113 1697 1765 1654 1774|G 140 1577 1696 1548 1722|O 168 1577 1593 1492 1663|O 195 1600 1629 1518 1728|G 222 1577 1632 1540 1681|G 249 1513 1583 1452 1748|G 277 1423 1510 1172 2396|G 303 1350 1417 1246 1490|O 330 1353 2216 1080 2355|O 358 2213 2381 2005 2715|G 385 1914 2378 1870 3008|G 411 1591 1911 1591 2018|G 439 889 1594 839 1594|O 467 886 1867 880 2105|O 494 1864 1896 1780 2311|G 521 1789 1899 1645 2044|O 548 1792 1887 1681 2027|G 576 1763 1890 1743 2102|G 603 1585 1768 1565 1914|O 629 1588 1995 1588 2149|G 657 1600 1992 1347 2099|G 684 1240 1603 1202 1658|O 710 1243 1308 1237 1373|O 738 1347 1530 1327 1539|G 766 1478 1524 1449 1533|G 793 1437 1472 1350 1472|O 820 1434 1655 1434 1702|G 848 1376 1649 1309 1667|G 875 1162 1376 1112 1405|O 902 1162 1286 1074 1318|G 929 1153 1283 1124 1309|G 956 932 1156 926 1225|G 984 796 929 755 987|O 1010 790 848 749 871|G 1038 775 842 706 851|G 1065 740 775 729 787|O 1093 738 793 729 833|O 1119 796 1002 796 1022|G 1147 987 996 923 1118|O 1174 984 1295 981 1311|G 1202 1115 1292 1048 1309|G 1228 979 1118 967 1246|G 1255 915 984 900 1103|O 1283 920 1286 894 1295|G 1310 1257 1289 1205 1487|G 1337 1162 1260 1159 1298`;
const day = `G 27 1780 1850 1740 1890|O 45 1850 1900 1760 1990|O 62 1900 2010 1870 2090|O 80 2000 2070 1960 2180|G 97 1940 2070 1880 2120|G 114 1850 1940 1830 2060|O 132 1860 1990 1840 2030|G 149 1820 1990 1790 2030|G 167 1690 1820 1670 1870|O 184 1690 1720 1650 1800|G 201 1700 1715 1640 1790|G 219 1562 1700 1560 1720|G 236 1344 1562 1342 1562|G 254 1342 1350 1298 1411|G 272 1286 1339 1283 1405|G 290 1153 1289 1106 1321|G 306 1138 1150 1106 1190|G 324 1124 1138 1115 1144|O 342 1124 1228 1042 1283|O 360 1228 1249 1202 1304|O 376 1249 1400 1240 1414|G 394 1269 1400 1266 1417|O 411 1266 1275 1211 1307|G 429 1205 1281 1182 1324|O 446 1199 1260 1077 1295|G 464 1214 1257 1196 1353|G 482 1095 1211 1086 1292|G 499 981 1092 976 1115|O 516 981 1005 981 1010|G 534 877 1002 851 1016|G 552 819 877 816 941|G 570 813 819 767 859|G 586 691 816 682 819|O 604 691 961 639 993|G 622 891 955 778 1016|G 639 839 868 743 915|O 655 839 859 807 932|O 673 859 1196 857 1228|O 691 1190 1243 1109 1347|O 708 1228 1379 1217 1405|G 726 1211 1350 1176 1371|O 743 1211 1228 1150 1240|O 761 1272 1680 1272 1700|O 778 1660 1850 1555 1890|O 796 1740 1850 1700 1960|O 813 1650 1850 1555 1880|O 830 1700 1860 1660 1890|G 848 1429 1860 1394 1880|O 866 1420 1810 1350 1880|O 883 1810 2070 1790 2130|O 901 2190 2270 2160 2740|G 918 2265 2290 2130 2340|O 936 2230 2435 2060 2450|G 953 2130 2440 2100 2510|G 971 2000 2130 1950 2140|G 988 1985 2000 1900 2060|G 1006 1760 1985 1750 1990|G 1023 1680 1760 1670 1800|G 1041 1650 1660 1610 1680`;
const m5 = `G 9 414 603 376 610|O 24 409 430 363 459|O 40 434 443 425 457|G 56 392 441 366 446|O 72 393 396 346 446|O 87 383 407 328 417|O 104 404 475 369 476|G 120 411 472 411 491|O 136 413 419 405 452|O 151 418 450 418 481|O 167 447 470 443 502|G 184 377 473 334 473|G 198 293 379 277 401|O 215 290 347 276 363|O 231 343 344 334 382|O 247 346 388 346 391|G 262 373 376 344 390|G 278 362 373 341 387|G 295 350 357 312 377|G 310 338 346 306 381|O 326 340 344 321 369|G 342 330 346 312 347|G 358 322 328 311 346|O 373 321 335 312 353|O 389 337 395 334 437|O 406 392 428 380 433|O 421 431 450 416 459|G 437 380 452 380 452|O 453 385 402 363 407|O 469 404 544 402 571|G 486 507 553 473 585|O 501 505 553 489 571|O 517 552 566 541 610|O 533 568 679 568 723|O 549 677 693 614 707|G 564 669 688 633 749|G 581 588 667 580 677|O 597 589 735 589 760|O 612 729 768 698 813|G 628 736 767 686 858|G 644 677 733 640 748|O 661 672 764 662 800|O 675 761 775 681 775|G 692 714 780 699 826|O 708 718 814 711 822|O 724 816 1095 816 1135|O 739 1096 1102 1032 1131|G 755 952 1107 952 1134|G 772 807 958 762 981|O 788 804 841 788 880|O 803 839 937 828 961|G 819 886 934 807 936|G 835 859 884 845 910|O 850 862 947 857 1039|G 866 829 961 783 1034|G 883 752 830 722 960|O 899 751 870 687 894|G 914 746 868 742 915|G 930 674 751 652 758|O 946 679 705 633 714|O 963 704 707 677 739|O 978 707 772 695 846|G 994 727 785 658 785|G 1010 682 729 640 740|G 1026 581 681 561 700|O 1041 592 665 555 690|O 1057 663 790 653 804|O 1074 788 934 788 983|G 1089 935 936 858 973|O 1105 935 964 871 1008|O 1121 958 1106 930 1116|O 1138 1109 1346 1067 1353|G 1152 1279 1350 1253 1388|G 1169 1138 1281 1130 1281|G 1185 1127 1137 1026 1137|G 1201 1089 1123 1074 1176|G 1216 1067 1089 993 1123|G 1232 1029 1070 1016 1108|O 1249 1026 1059 1006 1123|G 1265 977 1061 944 1063|O 1280 976 989 963 1047|G 1296 930 990 925 990`;

/* data units to drawing units: x0 + x / sx, y0 + y / sy */
const tr = (x0, y0, sx, sy) => (x, y) => [Math.round((x0 + x / sx) * 10) / 10, Math.round((y0 + y / sy) * 10) / 10];
function candles(data, t, w, up, dn) {
  return data.split('|').map(r => {
    const [k, ...n] = r.split(' '); const [x, a, b, c, d] = n.map(Number);
    const col = k === G ? up : dn, [px, pa] = t(x, a), pb = t(x, b)[1], pc = t(x, c)[1], pd = t(x, d)[1], X = Math.round(px) + .5;
    return `<path d="M${X} ${pc}V${pd}" stroke="${col}" stroke-width="1"/><rect x="${X - w / 2}" y="${pa}" width="${w}" height="${Math.max(1, pb - pa)}" fill="${col}"/>`;
  }).join('');
}
const poly = (s, t, attr) => `<polyline fill="none" ${attr} points="${s.split(' ').map(p => t(...p.split(',').map(Number)).join()).join(' ')}"/>`;
const text = (x, y, s, attr = '') => `<text x="${x}" y="${y + 5}" ${attr}>${s}</text>`;
const tag = (x, y, w, h, s, bg, fg = '#fff', b = 1, r = 0, dx = 8) => `<rect x="${x}" y="${y - h / 2}" width="${w}" height="${h}" rx="${r}" fill="${bg}"/>${text(x + (b ? dx : 2), y, s, `fill="${fg}"${b ? ' font-weight="700"' : ''}`)}`;
const line = (x1, y1, x2, y2, c, w = 1, d = '') => `<path d="M${x1} ${y1 + (w === 1 ? .5 : 0)}L${x2} ${y2 + (w === 1 ? .5 : 0)}" stroke="${c}" stroke-width="${w}" stroke-dasharray="${d}" fill="none"/>`;
const marker = (x, y) => `<path d="M${x - 6} ${y + 13}v-8l6-6 6 6v8z" fill="#b4b4b4" stroke="#444"/>`;

/* fine bars that follow a guide of [x, y] points */
function dense(guide, step, w, spread, wick, seed) {
  let s = seed; const rnd = () => (s = (s * 16807) % 2147483647) / 2147483647;
  const g = guide.split(' ').map(p => p.split(',').map(Number));
  let out = { G: '', O: '' }, bod = { G: '', O: '' }, i = 0, prev = g[0][1];
  for (let x = g[0][0]; x <= g[g.length - 1][0]; x += step) {
    while (i < g.length - 2 && x > g[i + 1][0]) i++;
    const [ax, ay] = g[i], [bx, by] = g[i + 1], slope = Math.min(2, 1 + Math.abs(by - ay) / 60);
    const y = ay + (by - ay) * (x - ax) / (bx - ax || 1) + (rnd() - .5) * spread * slope;
    const k = y <= prev ? G : O, hi = Math.min(y, prev), lo = Math.max(y, prev), X = Math.round(x) + .5, long = rnd() > .85 ? 2.2 : 1;
    out[k] += `M${X} ${(hi - rnd() * wick * long).toFixed(1)}V${(lo + rnd() * wick * long).toFixed(1)}`;
    if (w > 1) bod[k] += `M${X} ${hi.toFixed(1)}V${(lo + 1).toFixed(1)}`;
    prev = y;
  }
  return `<g fill="none"><path d="${out.G}" stroke="#12a0a0"/><path d="${out.O}" stroke="#dd9a1c"/><path d="${bod.G}" stroke="#12a0a0" stroke-width="${w}"/><path d="${bod.O}" stroke="#dd9a1c" stroke-width="${w}"/></g>`;
}
function frame(x, y, w, h, sep, axis, times, prices, hot = '') {
  return `<rect x="${x}" y="${y}" width="${w}" height="18" fill="${axis[0]}"/><rect x="${sep}" y="${y + 19}" width="${x + w - sep}" height="${h - 19}" fill="${axis[1]}"/>
  <path d="M${x} ${y + 18}h${w}" stroke="#ddd" stroke-width="2"/><path d="M${sep} ${y + 19}V${y + h}" stroke="#ddd" stroke-width="2"/>
  ${times.map(([tx, s]) => text(tx, y + 9, s, 'text-anchor="middle"')).join('')}
  ${prices.map(([py, s]) => text(sep + 8, py, s, s === hot ? 'font-weight="700"' : '')).join('')}`;
}
const A = tr(0, 0, 1.625, 2.904), B = tr(960, 0, 1.625, 2.904), C = tr(0, 1080, 1.633, 1.452);
const hours = (x, step, list) => list.map((s, i) => [Math.round(x + i * step), s]);
const minuteGuide = '1925,498 1937,498 1946,482 1952,490 1957,478 1961,452 1970,460 1976,482 1988,445 1994,462 2000,448 2009,428 2018,442 2024,472 2031,446 2040,478 2049,492 2058,460 2066,474 2074,456 2093,448 2102,465 2110,475 2115,468 2122,495 2130,455 2132,340 2134,500 2136,690 2138,620 2141,430 2143,480 2146,420 2149,365 2153,370 2158,420 2162,395 2167,410 2172,360 2180,380 2186,410 2197,365 2201,415 2204,310 2207,400 2210,480 2212,410 2216,440 2220,540 2223,480 2226,560 2232,570 2238,600 2244,640 2250,620 2256,680 2262,660 2268,730 2274,760 2278,850 2281,760 2286,700 2290,720 2296,650 2302,610 2308,560 2314,520 2318,560 2326,505 2334,520 2340,485 2346,440 2350,385 2354,400 2358,350 2362,395 2366,350 2370,320 2374,260 2378,232 2382,255 2386,275 2390,265 2394,295 2398,370 2402,420 2406,450 2408,520 2414,590 2418,540 2424,600 2429,570 2434,660 2438,620 2444,580 2450,560 2455,500 2459,480 2464,560 2470,510 2478,560 2484,530 2490,495 2496,550 2504,560 2511,505 2520,520 2526,570 2540,510 2546,530 2552,510 2560,540 2568,515 2576,540 2586,500 2591,450 2597,480 2600,470 2606,560 2614,590 2622,610 2632,580 2640,560 2646,540 2652,480 2658,390 2663,455 2668,430 2673,372 2682,340 2690,352 2698,350 2704,380 2716,364 2728,372 2736,400 2747,384 2756,395 2762,408 2768,434 2780,424 2794,426 2804,420 2812,385 2820,395 2826,400 2838,410 2843,452 2850,448 2860,480 2868,466 2874,460 2880,462 2884,445 2892,430 2898,420 2904,370 2909,400 2914,385 2918,348 2928,355 2938,318 2946,330 2950,340 2955,305 2960,335 2968,330 2980,365 2985,345 2990,358 2998,318 3006,325 3014,335 3020,318 3024,335 3032,272 3040,275 3048,262 3056,252 3060,240 3064,210 3072,220 3082,202 3090,205 3100,225 3110,218 3122,230 3130,200 3135,188 3142,202 3150,205 3160,200 3174,196 3190,193 3198,196 3204,212 3218,220 3226,204 3236,240 3242,232 3252,250 3258,272 3266,265 3276,255 3286,290 3292,278 3300,270 3304,290 3312,280 3320,285 3324,310 3330,365 3336,362 3344,310 3348,290 3356,315 3362,300 3374,320 3378,340 3384,300 3390,275 3396,310 3404,268 3412,270 3422,285 3430,265 3436,268 3442,246 3452,268 3458,320 3462,330 3468,312 3474,345 3480,380 3485,412 3492,375 3497,350 3504,365 3510,345 3518,352 3527,335 3532,340 3539,322';
const tenGuide = '2220,1294 2223,1323 2228,1318 2231,1294 2236,1280 2240,1290 2245,1312 2249,1373 2257,1401 2263,1382 2269,1376 2274,1419 2285,1423 2291,1396 2298,1410 2301,1530 2306,1560 2311,1505 2317,1483 2324,1473 2329,1475 2332,1508 2336,1480 2343,1469 2348,1498 2354,1507 2362,1490 2367,1494 2371,1514 2375,1594 2378,1644 2384,1621 2388,1639 2393,1640 2397,1662 2401,1600 2407,1576 2412,1598 2420,1608 2427,1629 2433,1608 2439,1621 2443,1605 2454,1615 2459,1576 2465,1562 2471,1585 2478,1584 2479,1526 2481,1501 2489,1514 2500,1526 2508,1505 2514,1526 2526,1501 2530,1489 2537,1541 2546,1501 2554,1473 2560,1448 2569,1462 2576,1437 2584,1412 2588,1373 2596,1373 2598,1400 2607,1387 2617,1401 2626,1376 2640,1375 2648,1414 2653,1396 2662,1409 2667,1403 2672,1451 2678,1442 2686,1451 2694,1469 2705,1462 2717,1460 2721,1425 2732,1418 2742,1416 2754,1409 2775,1401 2779,1380 2785,1355 2790,1330 2797,1317 2803,1337 2808,1344 2811,1376 2815,1416 2825,1425 2834,1416 2842,1423 2846,1401 2855,1376 2861,1396 2871,1398 2877,1366 2884,1371 2895,1368 2906,1382 2923,1402 2934,1385 2942,1395 2960,1378 2978,1350 2990,1362 3000,1345 3016,1350 3030,1335 3040,1352 3050,1320 3062,1340 3078,1325 3090,1300 3102,1280 3110,1302 3118,1325 3130,1305 3150,1312 3170,1322 3182,1300 3190,1290 3205,1312 3225,1318 3240,1310 3250,1278 3258,1264 3266,1285 3270,1266 3280,1263';
const charts = {
  m30: {
    title: 'US NDAQ 100', icon: 1, level: 'green', per: '30 minutes', span: '2 Jours', fast: ['5m', '15m'], spans: ['SLS', '3J', '1S'], models: '12345',
    box: [12, 111, 953, 928], svg: () => frame(12, 111, 953, 928, 881, ['#fff', '#fafafa'], hours(106, 66.9, ['12:00', '14:00', '16:00', '18:00', '20:00', '22:00', '01:00', '03:00', '05:00', '07:00', '09:00', '11:00']),
      [[175, '19 150,00'], [312, '19 100,00'], [587, '19 000,00'], [725, '18 950,00'], [863, '18 900,00'], [1000, '18 850,00']])
      + line(106, 450, 881, 450, '#e01010', 1, '2 1') + text(12, 451, '18,00 / 0,09 %', 'fill="#e01010"')
      + candles(m30, A, 13, '#10997b', '#e29d0c')
      + poly('18,1663 86,1698 113,1698 168,1670 222,1655 277,1605 303,1568 358,1762 385,1783 411,1755 439,1635 494,1698 521,1710 548,1736 576,1738 603,1722 629,1752 657,1732 710,1615 738,1603 793,1562 820,1565 848,1545 875,1493 902,1462 929,1418 984,1270 1038,1140 1065,1085 1093,1048 1147,1035 1174,1070 1202,1077 1228,1060 1255,1043 1283,1077 1310,1103 1337,1111', A, 'stroke="#0f0" stroke-width="2" stroke-dasharray="5 4"')
      + poly('18,1800 59,1797 86,1793 113,1785 168,1751 195,1742 249,1705 277,1684 303,1656 330,1712 358,1760 385,1774 411,1757 439,1685 494,1716 521,1721 548,1736 576,1738 603,1723 629,1752 657,1735 710,1660 738,1650 793,1617 820,1618 848,1598 875,1560 902,1537 929,1500 984,1390 1038,1290 1093,1210 1147,1177 1174,1185 1202,1179 1255,1142 1310,1162 1337,1162', A, 'stroke="#f00" stroke-width="2" stroke-dasharray="5 4"')
      + poly('18,2106 59,2076 86,2060 140,2012 195,1970 249,1921 277,1893 303,1862 330,1882 358,1911 385,1911 411,1893 439,1835 494,1841 521,1838 548,1840 576,1835 603,1821 629,1832 657,1818 710,1757 766,1732 793,1713 820,1710 848,1690 875,1660 905,1635 929,1610 956,1570 984,1526 1038,1446 1065,1408 1093,1374 1147,1330 1174,1329 1202,1315 1255,1275 1310,1275 1337,1269', A, 'stroke="#000" stroke-width="2"')
      + line(12, 400, 881, 400, '#e01010') + marker(839, 127)
      + tag(881, 399, 84, 23, '19 068,01', '#b20000', '#fff', 1, 2, 3) + tag(881, 450, 84, 19, '19 050,01', '#f00') + tag(881, 954, 84, 20, '18 866,24', '#afb0bb', '#000')
  },
  daily: {
    title: 'US NDAQ 100', icon: 1, level: '', per: '1 Jour', span: '3 Mois', fast: ['5m', '15m'], spans: ['SLS', '3J', '1S'], models: '12345',
    box: [972, 111, 952, 928], svg: () => frame(972, 111, 952, 928, 1841, ['#2fd415', '#2fd415'], [[1108, '10 juin'], [1214, '24 juin'], [1318, '8 juil.'], [1429, '22 juil.'], [1536, '5 août'], [1658, '18 août'], [1806, '1 sept.']],
      [[170, '21 000,00'], [376, '20 000,00'], [582, '19 000,00'], [789, '18 000,00'], [995, '17 000,00']], '20 000,00')
      + '<rect x="971" y="724" width="596" height="42" fill="#e9f5e9" stroke="#3a9a3a" stroke-dasharray="2 1"/><rect x="971" y="857" width="596" height="80" fill="#e9f5e9" stroke="#3a9a3a" stroke-dasharray="2 1"/>'
      + line(1068, 574, 1841, 574, '#e01010', 1, '2 1') + text(972, 575, '18,00 / 0,09 %', 'fill="#e01010"')
      + candles(day, B, 7, '#5a8f69', '#e29d0c')
      + poly('20,2055 60,2035 90,2035 120,2000 160,1940 200,1860 240,1720 285,1568 325,1430 360,1380 376,1385 400,1360 430,1330 445,1325 464,1305 516,1195 552,1100 570,1060 586,1010 604,1003 622,985 655,952 673,985 691,1025 708,1078 743,1115 761,1190 790,1300 813,1370 830,1440 848,1443 866,1500 880,1568 901,1700 918,1790 936,1870 953,1905 988,1920 1006,1890 1041,1820', B, 'stroke="#0f0" stroke-width="2" stroke-dasharray="5 4"')
      + poly('20,2105 80,2070 120,2020 170,1945 219,1860 270,1720 340,1568 360,1535 376,1525 430,1450 464,1415 499,1340 534,1260 570,1200 586,1160 604,1145 655,1080 691,1108 708,1128 743,1140 778,1240 813,1310 830,1355 848,1360 866,1400 909,1568 936,1660 953,1710 988,1740 1041,1720', B, 'stroke="#f00" stroke-width="2" stroke-dasharray="5 4"')
      + poly('18,2175 60,2140 110,2090 160,2020 210,1945 260,1850 310,1775 360,1700 410,1635 460,1568 482,1535 516,1470 552,1405 586,1335 622,1288 655,1240 673,1236 708,1246 743,1243 761,1265 778,1295 813,1335 830,1365 848,1370 866,1395 885,1440 909,1510 930,1568 953,1620 971,1640 1006,1650 1041,1652', B, 'stroke="#000" stroke-width="2"')
      + line(972, 568, 1841, 568, '#e01010') + marker(1610, 127)
      + tag(1841, 568, 83, 20, '19 068,01', '#b20000', '#fff', 1, 2, 3)
      + [[170, '13', '#0f0'], [192, '34', '#000'], [214, '22', '#f00']].map(([y, n, c]) => `<path d="M976.500 ${y - 9.5}h116v18h-116zM994.500 ${y - 9.5}v18M1013 ${y - 9.5}v18" fill="#fff" stroke="#222"/>` + text(1014, y, `MME (${n}, 0)`, `fill="${c}" font-size="13"`) + `<path d="M980 ${y - 5}l9 9m0-9l-9 9" stroke="${c}" stroke-width="3"/><path d="M999 ${y + 4}h10" stroke="${c}" stroke-width="3"/>`).join('')
  },
  minute: {
    title: 'US NDAQ 100', num: 2, popup: 1, per: '1 minute', span: '24 heures', fast: ['10s', '30s', '1m'], spans: ['SLS', '1J', '1S'], models: '25789', param: 1, palette: 32,
    box: [1925, 111, 1919, 829], svg: () => '<rect x="1920" y="359" width="314" height="373" fill="#fefce8" stroke="#ffe81a" stroke-width="2" stroke-dasharray="3 2"/>' + frame(1925, 111, 1919, 829, 3761, ['#f5ffff', '#f5ffff'], hours(1976, 70.8, ['12:00', '13:00', '14:00', '15:00', '16:00', '17:00', '18:00', '19:00', '20:00', '21:00', '22:00', '15 Aug', '01:00', '02:00', '03:00', '04:00', '05:00', '06:00', '07:00', '08:00', '09:00', '10:00', '11:00', '12:00', '13:00', '14:00']),
      [[244, '19,100.00'], [612, '18,950.00'], [734, '18,900.00']])
      + dense(minuteGuide, 1.18, 1, 13, 8, 77) + line(1925, 489, 3761, 489, '#2e302e', 2)
      + line(1925, 232, 2390, 129, '#f00', 4, '5 5') + line(3146, 938, 3501, 859, '#f00', 4, '5 5') + line(2361, 695, 3605, 384, '#ff50f0', 2, '5 5')
      + line(1925, 322, 3761, 322, '#e01010', 1) + line(2015, 366, 3761, 366, '#e01010', 1, '2 1') + text(1926, 368, '18.00 / 0.09%', 'fill="#e01010"') + line(1925, 720, 3761, 720, '#000', 2)
      + '<ellipse cx="2136" cy="630" rx="10" ry="80" fill="none" stroke="#e00" stroke-width="2" stroke-dasharray="10 4"/><ellipse cx="2278" cy="853" rx="13" ry="40" fill="none" stroke="#e00" stroke-width="2" stroke-dasharray="8 4"/>'
      + '<path d="M3323 708h73v20h-73z" fill="#ffffe0" stroke="#f00"/><path d="M3396 708l12 11-12 11z" fill="#f00"/>' + text(3325, 718, '19000 fut', 'font-weight="700" fill="#000"') + marker(3539, 129)
      + tag(3761, 322, 83, 24, '19,068.01', '#b20000', '#fff', 1, 2, 3) + tag(3761, 366, 83, 19, '19,050.01', '#f00') + tag(3763, 488, 66, 16, '19,000.00', '#2e302e', '#fff', 0, 2) + tag(3763, 720, 66, 17, '18,905.26', '#000', '#fff', 0, 2) + tag(3761, 855, 83, 20, '18,850.08', '#aebbb5', '#000')
  },
  m5: {
    title: 'US NDAQ 100 - Sep 2024', num: 1, level: 'cyan', per: '5 minutes', span: '7 heures', fast: ['1m', '5m', '15m'], spans: ['SLS'], models: '12345', q: ['19 162,88', '19 165,88', '3,00', '0,09', '17,25'],
    box: [0, 1185, 921, 953], svg: () => frame(0, 1185, 921, 953, 837, ['#fff', '#fafafa'], hours(73, 116.9, ['05:00', '06:00', '07:00', '08:00', '09:00', '10:00', '11:00']),
      [[1303, '19 220,00'], [1457, '19 200,00'], [1611, '19 180,00'], [1765, '19 160,00'], [1919, '19 140,00'], [2072, '19 120,00']])
      + candles(m5, C, 5, '#16b8a2', '#df900c')
      + line(0, 1720, 837, 1720, '#e01010') + line(0, 1807, 837, 1807, '#0a3ca8', 2, '2 2') + line(0, 1830, 837, 1830, '#999', 1, '3 2') + line(96, 1853, 837, 1853, '#f00', 1, '2 2')
      + text(3, 1819, '(23,60 %)', 'fill="#888"') + text(0, 1854, '17,25 / 0,09 %', 'fill="#f00"') + marker(803, 1204)
      + tag(837, 1719, 84, 24, '19 165,88', '#00b000', '#fff', 1, 3, 3) + tag(839, 1807, 65, 17, '19 154,42', '#0a3ca8', '#fff', 0, 3) + tag(839, 1830, 65, 17, '19 151,62', '#959595', '#222', 0, 3) + tag(837, 1853, 84, 19, '19 148,63', '#f00')
  },
  s10: {
    title: 'US NDAQ 100', num: 4, level: 'cyan', per: '10 secondes', span: '2 heures', fast: ['10s', '30s', '1m'], spans: ['SLS', '1J', '1S'], models: '25789', param: 1, palette: 20,
    box: [2220, 1191, 1275, 591], svg: () => frame(2220, 1191, 1275, 591, 3409, ['#f5ffff', '#f5ffff'], [[2306, '10:30'], [2594, '10:45'], [2884, '11:00'], [3173, '11:15']],
      [[1242, '19 070,00'], [1345, '19 060,00'], [1554, '19 040,00'], [1658, '19 030,00'], [1762, '19 020,00']])
      + dense(tenGuide, 3.2, 3, 12, 8, 4242) + line(2220, 1262, 3409, 1262, '#e01010') + line(2313, 1449, 3409, 1449, '#e01010', 1, '2 1') + text(2220, 1450, '18,00 / 0,09 %', 'fill="#f00"') + marker(3282, 1209)
      + tag(3266, 1199, 143, 16, '', '#000') + text(3268, 1199, '15 août 2024 11:32:40', 'fill="#fff"')
      + tag(3409, 1261, 86, 22, '19 068,01', '#b20000', '#fff', 1, 2) + tag(3409, 1449, 86, 19, '19 050,01', '#f00') + tag(3409, 1742, 86, 20, '19 021,63', '#aeb9b6', '#000')
  }
};
const toolNames = ['Ligne De ...', 'Ligne S/r', 'Cours', 'Fixe', 'Nb', 'Fibonacci', 'Rectangle', 'Ovale', 'Flèche', 'Vague Mo...', 'Vague Co...'];
fill('[data-chart]', el => {
  const c = charts[el.dataset.chart], q = c.q || ['19 066,01', '19 068,01', '2,00', '0,09', '18'];
  const small = t => `<button class="q${t.length > 2 ? ' wide' : ''}">${t}</button>`;
  el.innerHTML = `<div class="bar">${burger}<div class="tab">${c.num ? `<span class="num">${c.num}</span>` : ic('linechart', 'i14')}<span>${c.title}</span>${ic('search')}</div>
  ${c.popup ? '' : `<button class="add" aria-label="Ajouter">${ic('plus', 'i10')}</button>`}<span class="grow"></span>${perf(q[3], q[4])}
  <div class="quote"><b class="sell">${q[0]}</b><b class="buy">${q[1]}</b><i>${q[2]}</i></div>
  <div class="tools">${c.popup ? '' : level(c.level) + ic('expand', 'i12') + ic('popout', 'i12') + ic('cross', 'i14')}</div></div>
  <div class="strip"><button class="w30" aria-label="Liste">${ic('sheet')}</button><button class="w33" aria-label="Disposition">${ic('layout')}</button><button class="w86">${c.per}</button>${c.fast.map(small).join('')}
  <button class="w90">${c.span}</button>${c.spans.map(small).join('')}<button class="w89">${ic('sliders')}Modèles</button>${[...c.models].map(small).join('')}
  <button class="w74">${ic('candle')}Achat</button><button class="w59">${ic('eye')}Lié</button><button class="grow">${ic('cog')}${c.param ? 'Paramètres' : ''}</button></div>
  <svg class="plot" viewBox="${c.box.join(' ')}">${c.svg()}</svg>
  ${c.palette ? `<div class="palette"><div>${toolNames.map((n, i) => `<div class="tool"><i>${ic('t' + i, '')}</i>${n}</div>`).join('')}${'<div class="tool none"><i></i></div>'.repeat(c.palette)}</div></div>` : ''}
  <div class="foot"><button aria-label="Recharger">${ic('reload')}</button><button aria-label="Effacer">${ic('forbid')}</button><button class="lit" aria-label="Dessiner">${ic('pencil')}</button><button class="lit" aria-label="Trier">${ic('updown')}</button><span class="grow"></span>
  <button class="name fav${c.palette ? ' on' : ''}">Favoris${ic('star', 'i12')}</button><button class="name">Période</button><button class="name">Outils De Dessin</button><button class="name">Indicateurs</button><button class="name">Figures</button><span class="grow"></span>
  <button aria-label="Ajuster">${ic('fit')}</button><button aria-label="Zoom moins">${ic('minus', 'i14')}</button><button aria-label="Zoom plus">${ic('plus', 'i12')}</button><button class="lit" aria-label="Réticule">${ic('xhair')}</button><button class="lit" aria-label="Hauteur">${ic('vfit')}</button></div>`;
});

/* ---------- price cards ---------- */
const cards = [['US NDAQ 100', 'Sep 2024', '0,09', '17,25', '3,00', '19162,', '88', '19165,', '88', '19 099,38', '19 224,38', '0,1'], ['US 30', 'Sep 2024', '0,09', '37', '4,0', '40204,', '0', '40208,', '0', '40 111,5', '40 235,5', '-'], ['US SPX 500', 'Sep 2024', '0,05', '3,25', '7,0', '5484,5', '3', '5485,2', '3', '5 472,28', '5 492,23', '-'], null,
  ['Allemagne 40', 'Sep 2024', '0,22', '39,65', '2,0', '18019,', '0', '18021,', '0', '17 949,0', '18 078,5', '0,1'], ['France 40', 'Août 2024', '0,01', '1,2', '2,0', '7339,', '5', '7341,', '5', '7 336,8', '7 366,8', '-'], ['Euro 50', 'Sep 2024', '0,01', '0,85', '2,0', '4755,', '5', '4757,', '5', '4 744,0', '4 778,5', '-']];
document.querySelector('[data-cards]').innerHTML = cards.map((c, i) => !c ? '<div class="card blank"></div>' : `<section class="card"><div class="bar">${burger}<div class="tab"><span>${c[0]}<br>${c[1]}</span>${i ? ic('search') : ''}</div><span class="grow"></span>${perf(c[2], c[3])}<div class="tools">${level('')}${ic('cross', 'i14')}</div></div>
  <div class="deal"><b>VENDRE</b><span>${c[4]}</span><b>ACHETER</b></div><div class="big"><span>${c[5]}<small>${c[6]}</small></span><span>${c[7]}<small>${c[8]}</small></span></div>
  <div class="lows"><span>B:${c[9]}</span><input type="text" value="${c[11]}" aria-label="Quantité ${c[0]}"><button aria-label="Choisir">${ic('chevbold', 'i10')}</button><span>H:${c[10]}</span></div></section>`).join('');

/* ---------- product lists ---------- */
const lists = {
  america: { name: 'AMERICA EUROPE', cols: [228, 117, 103, 78, 102, 100], edge: 1, roll: 1, foot: 1, h: 304, rows: `US SPX 500 - Sep 2024|0,05|3,25|5 472,28|5 492|5 484,53|5 485,23
US NDAQ 100 - Sep 2024|0,09|17,25|19 099,38|19 224|19 162,88|19 165,88
US 30 - Sep 2024|0,09|37|40 111,5|40 23|40 204,0|40 208,0
US SPX Midcap 400 - Sep 2024|-0,07|2,25|2 959,30|2 979|2 962,10|2 963,20
Europe 600 - Sep 2024|0,18|0,95|506,35|508|506,80|507,10
Euro 50 - Sep 2024|0,01|0,85|4 744,0|4 77|4 755,5|4 757,5
Allemagne 40 - Sep 2024|0,22|39,65|17 949,0|18 07|18 019,0|18 021,0
France 40 - Août 2024|0,01|1,2|7 336,8|7 36|7 339,5|7 341,5
UK 100 - Sep 2024|0|0,2|8 296,4|8 33|8 315,8|8 317,8
Bitcoin (USD)|-1,23|729,21|57 690,975|59 203,8|58 394,740|58 469,740^` },
  asie: { name: 'ASIE', cols: [222, 141, 115, 101, 76, 73], h: 215, rows: `Japon 225|0,97|355|36 254,00|36 903,50|36 661,50|36 668,50
Japon 225 - Sep 2024|0,97|355|36 222,5|36 875,0|36 625,0|36 645,0
Hong Kong 50|0,7|119,3|16 895,0|17 293,1|17 116,3|17 121,3
Hong Kong Chine H-shares -...|1,17|70,2|5 943,3|6 109,1|6 027,3|6 045,3
Australie 200|-0,29|23,135|7 852,28|7 898,94|7 859,69|7 861,69
Chine A50 - Août 2024|1,35|156,5|11 480,5|11 750,5|11 683,5|11 693,5` },
  devise: { name: 'Devise Taux Vix', cols: [228, 141, 61, 97, 102, 99], edge: 2, roll: 1, foot: 1, h: 251, plu: 1, rows: `US Dollar Index - Sep 2024|-0|0,2|102,368|102,545|102,423|102,453
EUR/USD|-0,01|1,5|1,10029|1,10187|1,10106|1,10111
Euro OAT - Sep 2024|-0|1|126,775|127,065|126,805|126,845
Euro Bund - Sep 2024|-0,05|7|134,751|135,079|134,821|134,849
US T-Note 5 YR - Sep 2024|-0,03|3,9|109,127|109,240|109,158|109,178
US T-Note 10 YR - Sep 2024|-0,05|6,2|113,550|113,731|113,582|113,622
Volatility Index - Août 2024|-0,3|0,05|16,025|16,525|16,225|16,325` },
  commod: { name: 'Commodities', cols: [215, 141, 101, 100, 87, 84], foot: 1, h: 235, rows: `Or|0,34|8,51|2 446,24|2 459,08|2 456,15v|2 456,57
Argent|1,78|49,3|27,470|28,088|28,043|28,068
Pétrole Brut Brent|0,42|33,8|80,064|80,783|80,677|80,707
Pétrole US Brut Léger|0,34|26,6|77,369|78,063|77,962|77,992
Gaz Naturel|0,47|1,05|2,194|2,226|2,217|2,225
Cuivre|1,48|59,9|401,38|409,55|408,68^|408,98` },
  amerique: { name: 'AMERIQUE-EUROPE', cols: [120, 109, 61, 100, 73, 77], foot: 1, plu: 1, tight: 1, rows: `US SPX 500|0,04|2,2|5 447,07|5 467,16|5 459,69|5 460,29
US NDAQ ...|0,09|18|18 998,42|19 125,56|19 066,01|19 068,01
US 30|0,08|35,68|39 992,64|40 119,93|40 087,54|40 090,84
Euro 50|0,05|2,45|4 726,3|4 757,0|4 739,0|4 740,6
Allemagne...|0,25|45,13|17 884,80|18 014,70|17 955,95|17 957,15
France 40|0,14|10 645|7 336,75|7 363,39|7 339,37|7 340,37
UK 100|-0,26|21,71|8 266,81|8 313,55|8 288,34|8 289,34` }
};
const mark = v => v.endsWith('^') ? v.slice(0, -1) + ic('up', 'tick up') : v.endsWith('v') ? v.slice(0, -1) + ic('down', 'tick dn') : v;
fill('[data-list]', el => {
  const l = lists[el.dataset.list], e = l.edge ? ' class="edge"' : '';
  if (l.h) el.style.height = l.h + 'px';
  const total = l.cols.reduce((a, b) => a + b);
  el.innerHTML = `<div class="bar">${burger}<div class="tab"><span>${l.name}</span>${ic('chevdown', 'i12')}${ic('zoomin')}</div><button class="add" aria-label="Ajouter">${ic('plus', 'i10')}</button><span class="grow"></span><div class="tools">${level('cyan')}${ic('expand', 'i12')}${ic('cross', 'i14')}</div></div>
  <table class="grid${l.edge === 2 ? ' near' : ''}${l.tight ? ' tight' : ''}"><colgroup>${l.cols.map(w => `<col style="width:${(w / total * 100).toFixed(3)}%">`).join('')}</colgroup>
  <thead><tr><th>PRODUIT${ic('sort', '')}</th><th>PERFORMANCE${ic('sort', '')}</th><th>${l.plu ? 'PLU...' : 'PLUS BAS'}${ic('sort', '')}</th><th${e}>PLUS HAUT${l.edge === 1 ? '' : ic('sort', '')}</th><th class="bid">VENTE</th><th class="ask">ACHAT</th></tr></thead>
  <tbody>${l.rows.split('\n').map(r => { const [n, p, v, lo, hi, b, a] = r.split('|'), neg = p[0] === '-'; return `<tr><td>${ic('dots', '')}${n}</td><td class="chg ${neg ? 'neg' : 'pos'}"><span>${ic(neg ? 'down' : 'up', '')}${p.replace('-', '')} %</span>${v}</td><td>${lo}</td><td${e}>${hi}</td><td class="bid">${mark(b)}</td><td class="ask">${mark(a)}</td></tr>`; }).join('')}</tbody></table>
  <div class="rest"></div>${l.roll ? '<div class="roll"><i></i></div>' : ''}${l.foot ? `<div class="view"><button>Vue Classique${ic('up', '')}</button></div>` : ''}`;
});

/* ---------- order tickets ---------- */
fill('[data-order]', el => {
  const k = el.dataset.order;
  el.innerHTML = `<div class="bar">${burger}<div class="tab"><span>US NDAQ 100</span>${ic('search')}</div><span class="grow"></span><div class="tools">${level('cyan')}${ic('cross', 'i14')}</div></div>
  <div class="ticket"><div><b>VENDRE</b><p>19066,<small>01</small></p><span>B:18 998,42</span></div><div><b>ACHETER</b><p>19068,<small>01</small></p><span>H:19 125,56</span></div><button class="lvl">Niveau 1${ic('chevbold', 'i10')}</button><span class="sp">2,00</span></div>
  <div class="block"><label>Unités<input type="text" value="0,04" id="u${k}"></label><label>Montant (€)<input class="soft" type="text" value="696,16" id="m${k}"></label><button class="kind"><b>Marché</b><i>${ic('chevbold', 'i10')}</i></button></div>
  <div class="block stop"><span class="cap s"><button aria-label="Sens">${ic('arrowdn', 'i12')}</button>Stop Loss</span><span class="cap p"><button aria-label="Suiveur">${ic('wave', 'i12')}</button>Points</span><span class="cap r"><button aria-label="Retirer">${ic('cross', 'i14')}</button></span>
  <input class="soft" type="text" value="19044,01" aria-label="Stop Loss"><input type="text" value="24,00" aria-label="Points"><button class="kind"><b>Classique</b><i>${ic('chevbold', 'i10')}</i></button><small>Montant (€) 0,88</small></div>
  <button class="profit">+ Take Profit</button>
  <div class="est"><dl><div><dt>Marge Estimée (€)</dt><dd>34,63</dd></div><div><dt>Coûts Estimés (€)</dt><dd>0,19</dd></div></dl><button aria-label="Détails">›</button></div>
  <a class="doc" href="#">Document d'Informations clés${ic('download')}</a><button class="place">Placer Ordre au Marché d'Achat</button>`;
});

/* ---------- positions ---------- */
fill('[data-positions]', el => {
  const w = [35, 261, 131, 140, 101, 43, 133, 99, 101, 76, 74, 49], sum = w.reduce((a, b) => a + b);
  const h = [ic('handle', 'grip'), 'POSITION/ORDRE N° ▲', 'A/V<span class="push">UNITÉS</span>', 'MONTANT', 'COURS', 'T', 'PV&amp;MV TOTALES' + ic('sort', ''), 'STOP LOSS', 'TAKE PROFIT', 'VENTE', 'ACHAT', ''];
  el.innerHTML = `<div class="bar">${burger}<div class="tab"><span>Positions (0)</span>${ic('cross', 'i12')}</div><div class="tab dim">Carnet des Ordres Exécutés</div><div class="tab dim">Historique</div><button class="add" aria-label="Ajouter">${ic('plus', 'i10')}</button><span class="grow"></span><div class="tools">${level('')}${ic('expand', 'i12')}${ic('cross', 'i14')}</div></div>
  <table class="grid"><colgroup>${w.map(v => `<col style="width:${(v / sum * 100).toFixed(3)}%">`).join('')}</colgroup><thead><tr>${h.map((t, i) => `<th${i === 9 ? ' class="bid"' : i === 10 ? ' class="ask"' : ''}>${t}</th>`).join('')}</tr></thead></table>
  <div class="notice"><b><i>i</i></b>Aucune Transaction Ou Position.</div>`;
});
```
